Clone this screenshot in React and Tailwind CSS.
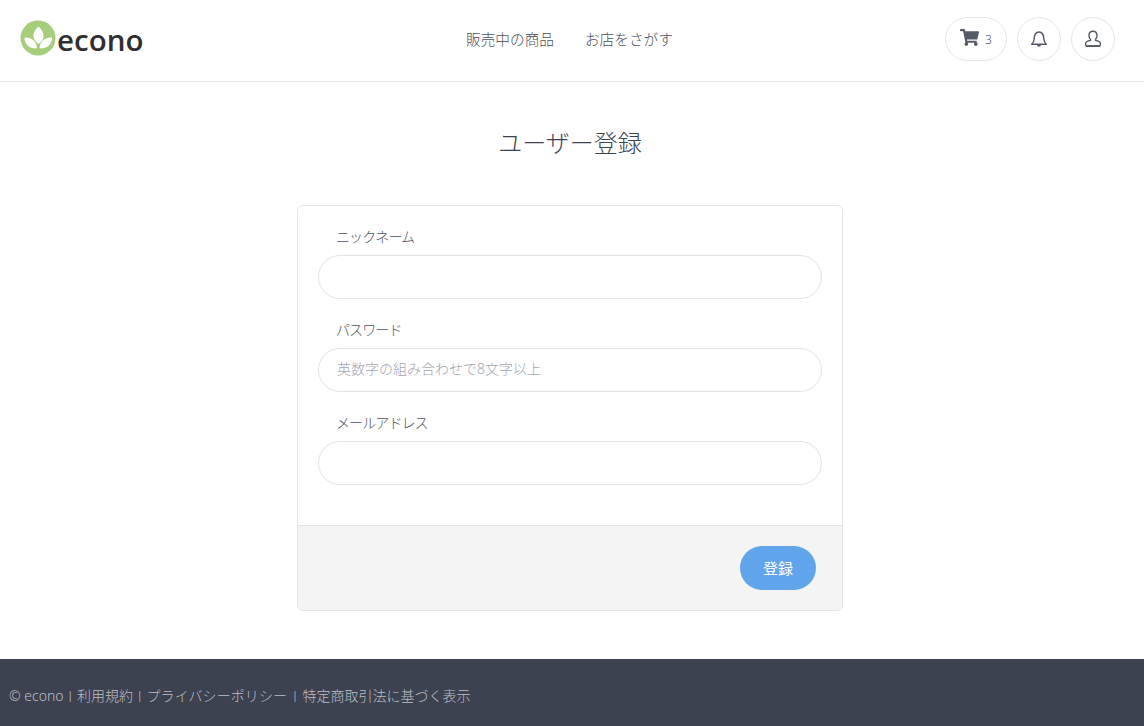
import React from "react";
import { FaShoppingCart } from "react-icons/fa";

const font = "font-['Noto_Sans','Noto_Sans_CJK_JP',sans-serif]";

function Logo() {
  return (
    <div className="flex items-center mt-[-6px]">
      <svg width="36" height="36" viewBox="0 0 36 36" className="shrink-0">
        <circle cx="18" cy="18" r="17.5" fill="#a5cd7c" />
        <path d="M18.5 6.5C22.8 10.8 24.4 14.5 23.1 18.2C22.3 20.6 20.5 22.4 18.5 24C16.5 22.4 14.7 20.6 13.9 18.2C12.6 14.5 14.2 10.8 18.5 6.5Z" fill="#fff" />
        <path d="M4.5 17.5C9.3 17.3 13 19 15.1 22C16.3 24 16.8 26 16.9 28.3C13 28.8 9.5 27.7 7.2 25.1C5.2 22.8 4.5 20.2 4.5 17.5Z" fill="#fff" />
        <path d="M32 17.5C27.2 17.3 23.5 19 21.4 22C20.2 24 19.7 26 19.6 28.3C23.5 28.8 27 27.7 29.3 25.1C31.3 22.8 32 20.2 32 17.5Z" fill="#fff" />
      </svg>
      <span className="ml-px text-[29.5px] leading-none font-semibold text-[#2f2f2f] font-['Open_Sans',sans-serif] mt-1">econo</span>
    </div>
  );
}

function Field({ label, placeholder }) {
  return (
    <div className="mb-5">
      <label className="block pl-[18px] mb-2 text-sm tracking-[-0.9px] leading-[21px] text-[#4c505a] font-light">{label}</label>
      <input
        type="text"
        placeholder={placeholder}
        className="block w-full h-11 rounded-full border border-[#e2e3e5] bg-white px-[18px] pb-[3px] text-sm font-light outline-none placeholder:text-[#a3a6ae]"
      />
    </div>
  );
}

export default function App() {
  return (
    <div className={`${font} min-h-[726px] flex flex-col bg-white text-[#3c4250]`}>
      <header className="relative h-[82px] shrink-0 border-b border-[#e5e5e5] flex items-center justify-between pl-[20px] pr-[29px]">
        <Logo />
        <nav className="absolute left-[466px] top-[29px] flex gap-[31px] text-[14.67px] leading-[20px] font-light text-[#4c505a]">
          <a>販売中の商品</a>
          <a>お店をさがす</a>
        </nav>
        <div className="flex items-center gap-[10px] mt-[-4px]">
          <button className="h-11 w-[62px] rounded-full border border-[#e4e5e7] flex items-center justify-center gap-[6px] text-[#555a67]">
            <FaShoppingCart size={19} className="mb-[3px]" />
            <span className="text-xs font-light mt-[3px]">3</span>
          </button>
          <button className="h-11 w-11 rounded-full border border-[#e4e5e7] flex items-center justify-center">
            <svg width="18" height="18" viewBox="0 0 18 18" fill="none" stroke="#555a67" strokeWidth="1.4" strokeLinejoin="round">
              <path d="M1.6 14.2C3.4 12.8 4 11.4 4.1 9.2C4.2 5.5 5.4 2 9 2C12.6 2 13.8 5.5 13.9 9.2C14 11.4 14.6 12.8 16.4 14.2Z" />
              <path d="M7.6 14.6C7.8 16.4 10.2 16.4 10.4 14.6Z" fill="#555a67" />
            </svg>
          </button>
          <button className="h-11 w-11 rounded-full border border-[#e4e5e7] flex items-center justify-center">
            <svg width="18" height="18" viewBox="0 0 18 18" fill="none" stroke="#555a67" strokeWidth="1.4" strokeLinejoin="round">
              <path d="M9 1.2C11.3 1.2 13 2.9 13 5.4C13 7.3 12.2 8.6 11.5 9.5V10.4C14.2 10.8 16.4 11.8 16.4 13.8V14.8C16.4 15.8 15.8 16.4 14.8 16.4H3.2C2.2 16.4 1.6 15.8 1.6 14.8V13.8C1.6 11.8 3.8 10.8 6.5 10.4V9.5C5.8 8.6 5 7.3 5 5.4C5 2.9 6.7 1.2 9 1.2Z" />
              <path d="M2.2 16H15.8" strokeWidth="1.8" />
            </svg>
          </button>
        </div>
      </header>

      <main className="flex-1 flex flex-col items-center pr-1">
        <h1 className="mt-[43px] text-2xl leading-[36px] font-light text-[#3c4250]">ユーザー登録</h1>
        <div className="mt-[44px] mb-12 w-[546px] rounded-md border border-[#e5e5e5] overflow-hidden">
          <div className="pt-5 px-5 pb-5">
            <Field label="ニックネーム" />
            <Field label="パスワード" placeholder="英数字の組み合わせで8文字以上" />
            <Field label="メールアドレス" />
          </div>
          <div className="h-[85px] border-t border-[#e5e5e5] bg-[#f4f4f5] flex items-center justify-end pr-[26px]">
            <button className="h-11 w-[76px] rounded-full bg-[#60a5ec] text-white text-[15px] font-normal">登録</button>
          </div>
        </div>
      </main>

      <footer className="h-[67px] shrink-0 bg-[#3c4250] flex items-center pl-[9px] pt-[6px] text-sm font-light text-[#bcbfc4]">
        <span>© econo</span>
        <span className="mx-[4px] text-[10px] font-light text-[#e0e1e4]">|</span>
        <a>利用規約</a>
        <span className="mx-[4px] text-[10px] font-light text-[#e0e1e4]">|</span>
        <a className="tracking-[0.1px]">プライバシーポリシー</a>
        <span className="mx-[5px] text-[10px] font-light text-[#e0e1e4]">|</span>
        <a>特定商取引法に基づく表示</a>
      </footer>
    </div>
  );
}
